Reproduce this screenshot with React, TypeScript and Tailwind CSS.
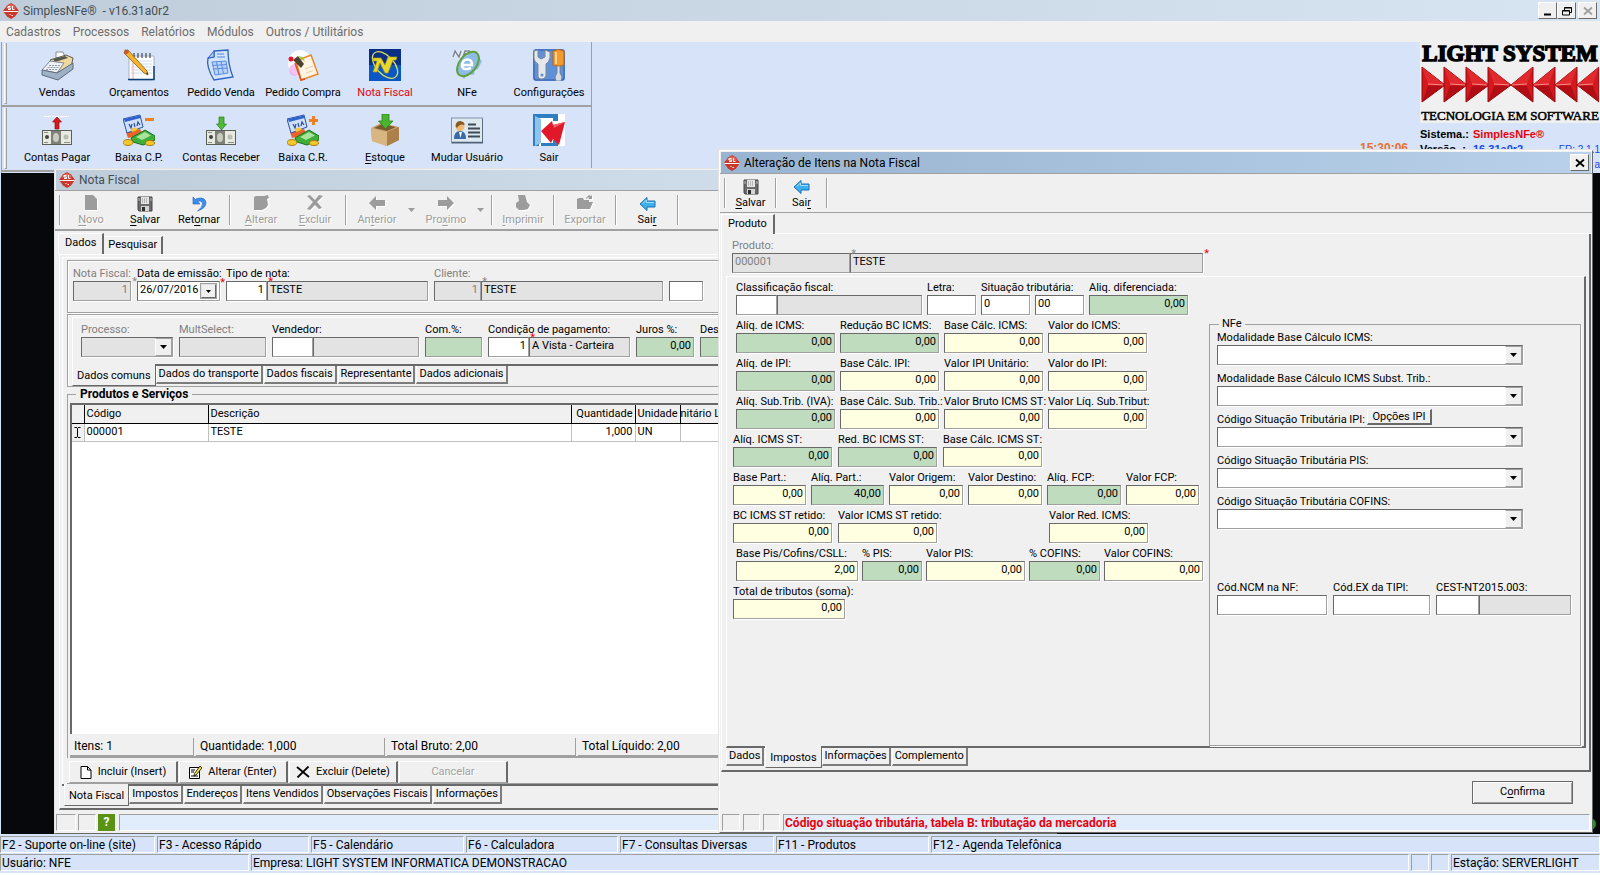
import React, { useId } from "react";

/* ---------- icons ---------- */

const AppIcon = () => (
    <svg width="16" height="16" viewBox="0 0 16 16" aria-hidden="true">
        <path d="M8 0 L12 2.5 L16 8 L12 13.5 L8 16 L4 13.5 L0 8 L4 2.5Z" fill="#c8382b" />
        <path d="M8 1 L11.5 3 L13 5.5 H3 L4.5 3Z" fill="#e2675a" />
        <path d="M0 8 H16 L15.2 9 H0.8Z" fill="#fff" />
        <path d="M5 3.5h2.5M5 3.5v1.5h2.5v1.5H5M9.5 3v3.5h2" stroke="#fff" strokeWidth="1" fill="none" />
        <path d="M6.5 11.5h1M8.5 12.5h1.5" stroke="#fff" strokeWidth="1" />
    </svg>
);

const RegisterIcon = () => (
    <svg width="34" height="32" viewBox="0 0 34 32" aria-hidden="true">
        <path d="M16 3 l7 0 2 5 -9 1z" fill="#fff" stroke="#8a8f99" />
        <path d="M10 11 L26 6 L33 9 L31 19 L18 23Z" fill="#f0d9a0" stroke="#3b3b3b" strokeWidth="0.8" />
        <path d="M13 10 L25 7 L28 9 L15 13Z" fill="#56584a" />
        <path d="M2 21 L10 12 L24 14 L17 24Z" fill="#eef1f5" stroke="#7b8794" />
        <path d="M2 21 L17 24 L33 14 V20 L18 31 L2 26Z" fill="#9fb1c6" stroke="#5c6b7c" />
        <path d="M9 16.500h11M7.500 18.500h11M6 20.500h11" stroke="#8d98a6" strokeDasharray="2 1" strokeWidth="1.200" />
    </svg>
);

const NotepadIcon = () => (
    <svg width="32" height="32" viewBox="0 0 32 32" aria-hidden="true">
        <path d="M6 7 H31 V30 L29 31 H6Z" fill="#fff" stroke="#a9b4c2" />
        <path d="M8 12h21M8 15h21M8 18h21M8 21h21M8 24h21" stroke="#c9dcf2" />
        <path d="M10 8v22" stroke="#f2a3a3" />
        <path d="M5 30.500 H31 V17" fill="none" stroke="#0b3f78" strokeWidth="1.500" />
        <path d="M11 4v5M15 4v5M19 4v5M23 4v5M27 4v5" stroke="#444c57" strokeWidth="1.200" />
        <path d="M2 1 L5 1 L24 22 L25 26 L21 24 L1 4Z" fill="#f5b52a" stroke="#8c5a12" strokeWidth="0.800" />
        <path d="M1 4 L2 1 L5 1 L6 3 L3 6Z" fill="#c35a3b" />
        <path d="M23 24 L25 26 L24.500 23.500Z" fill="#222" />
    </svg>
);

const SheetIcon = () => (
    <svg width="32" height="32" viewBox="0 0 32 32" aria-hidden="true">
        <path d="M9 2 L23 1 Q23 16 28 28 L9 31 Q1 18 3 9 L9 8Z" fill="#d4e4fb" stroke="#2e62c4" strokeWidth="1.300" />
        <path d="M9 2 L9 8 L3 9Z" fill="#a9c8f7" stroke="#2e62c4" />
        <path d="M12 5h7M12 8h8" stroke="#7ba5ea" strokeWidth="1.500" />
        <path d="M7 13 L21 12 L23 24 L10 26Z" fill="#b9d3fa" stroke="#5b8be0" />
        <path d="M11.500 13 l2.500 12.500M16 12.500 l2.500 12M7.500 16.500 l14.500-1M8 20 l14.500-1" stroke="#5b8be0" />
    </svg>
);

const PurchaseIcon = () => (
    <svg width="32" height="32" viewBox="0 0 32 32" aria-hidden="true">
        <ellipse cx="13" cy="14" rx="12" ry="13" fill="#fff" opacity="0.900" />
        <ellipse cx="8" cy="21" rx="6" ry="6" fill="#f3a6f0" opacity="0.700" />
        <path d="M9 12 L24 6 L31 25 L14 31Z" fill="#fdf4e3" stroke="#e78a2c" strokeWidth="1.500" />
        <path d="M8 14 L14 31 L18 30" stroke="#e0511b" strokeWidth="1.500" fill="none" />
        <path d="M6 11 L11 7 L17 15 L14 19Z" fill="#4b4230" />
        <path d="M11 7 l5 1 2 5z" fill="#a7c64a" />
        <circle cx="4" cy="10" r="2.500" fill="#e8162a" />
        <path d="M18 20l8-3M19 24l7-2.500" stroke="#e6cfae" />
    </svg>
);

const NotaIcon = () => (
    <svg width="32" height="32" viewBox="0 0 32 32" aria-hidden="true">
        <rect width="32" height="32" fill="#0a2e86" />
        <rect y="16" width="32" height="16" fill="#0b58c4" />
        <ellipse cx="16" cy="16" rx="16" ry="9" transform="rotate(48 16 16)" fill="none" stroke="#d8df5a" strokeWidth="1.300" />
        <path d="M4 9 H12 L16 16 L19 8 H28 L27 11 H24 L19 24 H16 L11 14 L8 23 H4 L8 12 H4Z" fill="#e9d82b" stroke="#a8981a" strokeWidth="0.700" />
    </svg>
);

const NfeIcon = () => (
    <svg width="32" height="32" viewBox="0 0 32 32" aria-hidden="true">
        <path d="M12 6 L26 2 L28 9 L31 12 L27 20 L24 21 L23 26 L17 25 L13 30 L9 25 L5 22Z" fill="#8dbbe6" />
        <path d="M2 8 l2-6 4 6 2-6M12 8 l2-6h5M13 5h4" fill="none" stroke="#eef3f8" strokeWidth="3" />
        <path d="M2 8 l2-6 4 6 2-6M12 8 l2-6h5M13 5h4" fill="none" stroke="#7a8696" strokeWidth="1.500" />
        <ellipse cx="17" cy="15" rx="14" ry="8.500" transform="rotate(-52 17 15)" fill="none" stroke="#5fa03a" strokeWidth="2" />
        <path d="M12 16 H21 Q21 10 16 10.500 Q11 11 11 17 Q12 22 20 19" fill="none" stroke="#fff" strokeWidth="2.500" />
    </svg>
);

const ConfigIcon = () => (
    <svg width="32" height="32" viewBox="0 0 32 32" aria-hidden="true">
        <rect width="32" height="32" rx="3" fill="#5f90d8" />
        <rect x="1" y="1" width="30" height="30" rx="2" fill="none" stroke="#2f5ea8" />
        <path d="M1 2 L5 1 V8 L8 10 L12 8 V1 L17 3 V9 Q16 13 13 15 V27 Q11 31 8 30 Q5 30 5 27 V15 Q1 13 1 9Z" fill="#e4e8ed" stroke="#7c8794" />
        <circle cx="9" cy="26" r="1.500" fill="#5f90d8" />
        <path d="M20 2 Q25 -1 31 2 V16 Q26 19 20 16Z" fill="#f59a2c" stroke="#b5641a" />
        <path d="M23 3 V15" stroke="#ffd591" strokeWidth="2" />
        <path d="M24 17h3v7l2 4-1 4h-5l-1-4 2-4z" fill="#d7dce2" stroke="#6f7a87" strokeWidth="0.800" />
    </svg>
);

const Bill = () => (
    <g>
        <rect x="1.500" y="16.500" width="29" height="14" fill="#e8e9e0" stroke="#5b6056" />
        <rect x="10" y="17" width="10" height="13" fill="#7e8178" />
        <ellipse cx="15" cy="23.500" rx="3" ry="4.500" fill="#c9cbc0" />
        <circle cx="6" cy="23" r="2" fill="#3f4540" />
        <circle cx="25" cy="23" r="2.500" fill="#b9bcb0" />
        <path d="M3 18.500h4M3 28.500h4M23 28.500h6" stroke="#8b9086" />
    </g>
);

const PayIcon = () => (
    <svg width="32" height="32" viewBox="0 0 32 32" aria-hidden="true">
        <path d="M3 2.500h25" stroke="#fff" strokeDasharray="7 1" />
        <path d="M16 3 L20.500 8 H18 V15 H14 V8 H11.500Z" fill="#d9161b" stroke="#8f0d10" strokeWidth="0.700" />
        <Bill />
    </svg>
);

const ReceiveIcon = () => (
    <svg width="32" height="32" viewBox="0 0 32 32" aria-hidden="true">
        <path d="M14 3 h5 v7 h2.500 L16.500 16 L11.500 10 H14Z" fill="#4fb83a" stroke="#2a7d1b" strokeWidth="0.700" />
        <Bill />
    </svg>
);

const SettleIcon = ({ plus }: { plus?: boolean }) => (
    <svg width="32" height="32" viewBox="0 0 32 32" aria-hidden="true">
        <path d="M3 18 l14-3 3 6 -15 3z" fill="#e8642a" />
        <path d="M0 5 L17 1 L20 13 L4 19Z" fill="#cfe0fa" stroke="#2b50a8" />
        <path d="M1 5 L17 1.500 L17.500 4 L2 8Z" fill="#2f62d0" />
        <path d="M6 10 l2 4 1-4M11 9l1 4M14 12 l1-4 2 3" stroke="#2f4d9c" fill="none" strokeWidth="1.200" />
        <path d="M8 15 Q12 12 15 15 Q12 18 9 18Z" fill="#f6c533" />
        <path d="M8 24 L22 16 L32 22 V26 L20 31 L10 28Z" fill="#3fae3b" stroke="#1d6f1e" />
        <path d="M13 23 L22 18 L28 21.500 L19 26Z" fill="#a9e49a" />
        <ellipse cx="5" cy="28.500" rx="5" ry="3" fill="#f4c72c" stroke="#a97e10" />
        <ellipse cx="27" cy="29" rx="4.500" ry="2.500" fill="#f4c72c" stroke="#a97e10" />
        <path d={plus ? "M22 6.500h9M26.500 2v9" : "M22 5.500h9"} stroke="#f08024" strokeWidth="3" />
    </svg>
);

const BoxIcon = () => (
    <svg width="32" height="32" viewBox="0 0 32 32" aria-hidden="true">
        <path d="M2 14 L12 9 L30 13 V26 L18 32 L3 27Z" fill="#c9a26d" />
        <path d="M2 14 L18 18 V32 L3 27Z" fill="#d9b681" />
        <path d="M18 18 L30 13 V26 L18 32Z" fill="#ab8049" />
        <path d="M5 14 L13 10 L27 13 L18 17Z" fill="#7d5a30" />
        <path d="M13 0 H20 V7 H24 L16.500 15 L9.500 7 H13Z" fill="#4bb32e" stroke="#2b8115" strokeWidth="0.800" />
    </svg>
);

const UserCardIcon = () => (
    <svg width="32" height="32" viewBox="0 0 32 32" aria-hidden="true">
        <rect x="0.500" y="4" width="31" height="25" fill="#dce9f1" stroke="#8295a8" />
        <path d="M1 28.500h31V5" fill="none" stroke="#4f6174" strokeWidth="1.500" />
        <path d="M3 25 Q3 17 9 17 Q15 17 15 25Z" fill="#3a6aa8" />
        <path d="M8 18 l1.500 6 1.500-6z" fill="#fff" />
        <circle cx="9" cy="12.500" r="4.500" fill="#f0b978" />
        <path d="M4.500 12 Q5 7 9.500 7 Q14 8 13.500 11 Q9 9 6 14Z" fill="#8a5a22" />
        <path d="M17 10.500h8M17 14.500h12M17 18.500h12M17 22.500h12" stroke="#3f4a55" strokeWidth="1.800" />
    </svg>
);

const ExitIcon = () => (
    <svg width="32" height="32" viewBox="0 0 32 32" aria-hidden="true">
        <rect width="32" height="32" fill="#fff" />
        <path d="M0 0 H25 V7 H20 V4 H6 V32 H0Z" fill="#2f7fc0" />
        <path d="M2 2 L8 5 V29 L2 32Z" fill="#8fc3ec" />
        <path d="M20 26h5v6h-17v-3h12z" fill="#2f7fc0" />
        <path d="M8 17 L19 7 L20 11 L32 8 L26 31 L20 25 L18 29Z" fill="#e0182a" />
        <path d="M19 7 L20 11 L32 8 L21 14Z" fill="#f4606a" />
    </svg>
);

const SaveIcon = () => (
    <svg width="16" height="16" viewBox="0 0 16 16" aria-hidden="true">
        <path d="M1 1h14v14H2L1 14z" fill="#6b6b6b" stroke="#444" />
        <rect x="4" y="1" width="8" height="7" fill="#e6e6e6" />
        <path d="M5.500 2v5M7.500 2v5M9.500 2v5" stroke="#b5b5b5" />
        <rect x="4" y="10" width="8" height="5" fill="#d5d5d5" />
        <rect x="5" y="11" width="3" height="4" fill="#2d2d2d" />
        <path d="M2 2v3M14 2v3" stroke="#bbb" />
    </svg>
);

const UndoIcon = () => (
    <svg width="16" height="16" viewBox="0 0 16 16" aria-hidden="true">
        <path d="M2 1 V8 H9 L6.500 5.500 Q11 4 11.500 7.500 Q12 11 6.500 15 Q14.500 12.500 15 7 Q14.500 0.500 6 2.500 L4.500 3.500Z" fill="#3d8ef0" stroke="#1b5fc4" strokeWidth="0.600" />
    </svg>
);

const BackIcon = () => (
    <svg width="17" height="16" viewBox="0 0 17 16" aria-hidden="true">
        <path d="M1 8 L8 1.500 V5 H16 V11 H8 V14.500Z" fill="#3fb0ee" stroke="#1a6fb0" />
        <path d="M3.500 7.500 L7.500 4 V6.500 H15" fill="none" stroke="#a6dcfa" />
    </svg>
);

const GrayIcon = ({ d }: { d: string }) => (
    <svg width="17" height="17" viewBox="0 0 17 17" aria-hidden="true">
        <path d={d} fill="#fff" transform="translate(1 1)" />
        <path d={d} fill="#9c9c9c" />
    </svg>
);

const grayPaths = {
    novo: "M2 0H10L14 4V15H2Z",
    alterar: "M1 2L3 1H11L15 0L16 3L14 4L15 10L13 13L9 15H1Z",
    excluir: "M0 1L3 0L8 5L12 0L16 1L10 7L15 13L12 14L8 10L3 15L0 14L6 7Z",
    anterior: "M0 8L7 1V5H16V11H7V15Z",
    proximo: "M16 8L9 1V5H0V11H9V15Z",
    imprimir: "M3 0H10L11 3L12 7L15 10L13 14L9 15H4L1 12V8L4 6Z",
    exportar: "M0 4L2 3H6L7 5H12V7H16L13 14H0ZM9 3L12 0L14 1L15 0V4H11L12 3L11 2L10 4Z",
};

const Caret = ({ className = "fill-black" }: { className?: string }) => (
    <svg width="7" height="4" viewBox="0 0 7 4" className={className} aria-hidden="true">
        <path d="M0 0H7L3.500 4Z" />
    </svg>
);

/* ---------- shared controls ---------- */

// "&Salvar" underlines the S, like a Windows accelerator
const Accel = ({ text }: { text: string }) => {
    const i = text.indexOf("&");
    if (i < 0) return <>{text}</>;
    return (
        <>
            {text.slice(0, i)}
            <u className="underline-offset-2">{text[i + 1]}</u>
            {text.slice(i + 2)}
        </>
    );
};

const Star = ({ red }: { red?: boolean }) => (
    <span aria-hidden="true" className={`absolute -right-1.5 -top-1 z-10 h-2 text-[11px] leading-[10px] ${red ? "text-red-600" : "text-[#8a8a8a]"}`}>
        *
    </span>
);

const tones = {
    white: "bg-white",
    gray: "bg-[#e3e3e3]",
    green: "bg-[#bfdcbf]",
    yellow: "bg-[#ffffe1]",
};

type BoxProps = {
    value?: string;
    tone?: keyof typeof tones;
    w: string;
    right?: boolean;
    muted?: boolean;
    star?: "red" | "gray";
    id?: string;
    label?: string;
};

const Box = ({ value = "", tone = "white", w, right, muted, star, id, label }: BoxProps) => (
    <span className={`relative block shrink-0 ${w}`}>
        <input
            id={id}
            aria-label={id ? undefined : label}
            defaultValue={value}
            disabled={muted}
            className={`block h-5 w-full border border-b-[#a0a0a0] border-l-[#696969] border-r-[#a0a0a0] border-t-[#696969] px-0.5 pb-1 leading-none shadow-[1px_1px_0_#fff] outline-none ${tones[tone]} ${right ? "text-right" : ""} ${muted ? "text-[#808080]" : "text-black"}`}
        />
        {star && <Star red={star === "red"} />}
    </span>
);

const FieldLabel = ({ id, text, muted }: { id: string; text: string; muted?: boolean }) => (
    <label htmlFor={id} className={`block h-[18px] w-0 whitespace-nowrap pt-[3px] leading-[15px] ${muted ? "text-[#808080]" : "text-black"}`}>
        {text}
    </label>
);

const Field = ({ label, extra, ...box }: BoxProps & { label: string; extra?: Omit<BoxProps, "id"> }) => {
    const id = useId();
    return (
        <div className="shrink-0">
            <FieldLabel id={id} text={label} muted={box.muted} />
            <div className="flex">
                <Box {...box} id={id} />
                {extra && <Box {...extra} label={label + " descrição"} />}
            </div>
        </div>
    );
};

const Num = ({ label, w = "w-[99px]", tone = "yellow", value = "0,00" }: { label: string; w?: string; tone?: keyof typeof tones; value?: string }) => (
    <Field label={label} w={w} tone={tone} value={value} right />
);

const Combo = ({ label, w, disabled, children }: { label: string; w: string; disabled?: boolean; children?: React.ReactNode }) => {
    const id = useId();
    return (
        <div className={`shrink-0 ${w}`}>
            <div className="flex h-[18px]">
                <label htmlFor={id} className={`whitespace-nowrap pt-[3px] leading-[15px] ${disabled ? "text-[#808080]" : "text-black"}`}>
                    {label}
                </label>
                {children}
            </div>
            <div className={`relative h-5 border border-b-[#a0a0a0] border-l-[#696969] border-r-[#a0a0a0] border-t-[#696969] shadow-[1px_1px_0_#fff] ${disabled ? "bg-[#e3e3e3]" : "bg-white"}`}>
                <select id={id} disabled={disabled} className="block h-full w-full appearance-none px-0.5 outline-none">
                    <option value=""></option>
                </select>
                <span className="pointer-events-none absolute inset-y-0 right-0 flex w-[17px] items-center justify-center border border-b-[#a0a0a0] border-l-white border-r-[#a0a0a0] border-t-[#a0a0a0] bg-[#f0f0f0]">
                    <Caret />
                </span>
            </div>
        </div>
    );
};

const Separator = () => <span className="mx-[3px] my-1 w-[2px] shrink-0 self-stretch border-l border-r border-l-[#a0a0a0] border-r-white" />;

const ToolButton = ({ icon, text, w = "w-[54px]", disabled }: { icon: React.ReactNode; text: string; w?: string; disabled?: boolean }) => (
    <button disabled={disabled} className={`flex shrink-0 flex-col items-center pt-1 text-[11px] leading-[16px] ${w} ${disabled ? "text-[#9c9c9c] [text-shadow:1px_1px_0_#fff]" : "text-black"}`}>
        <span className="flex h-[17px] items-center">{icon}</span>
        <span>
            <Accel text={text} />
        </span>
    </button>
);

const DropArrow = () => (
    <button disabled aria-label="Mais opções" className="flex w-[15px] shrink-0 items-center justify-center">
        <Caret className="fill-[#9c9c9c]" />
    </button>
);

// tabs that hang below the page; the active one is a little taller
const BottomTabs = ({ tabs, active }: { tabs: string[]; active: string }) => (
    <div role="tablist" className="flex items-start">
        {tabs.map((t) => (
            <button
                key={t}
                role="tab"
                aria-selected={t === active}
                className={
                    t === active
                        ? "relative -mt-0.5 h-[22px] shrink-0 border-b border-l border-r border-b-[#696969] border-l-white border-r-[#696969] bg-[#f0f0f0] px-1 pt-1"
                        : "mr-px h-[18px] shrink-0 border-b-2 border-l border-r-2 border-b-[#7c7c7c] border-l-white border-r-[#7c7c7c] px-0.5"
                }
            >
                {t}
            </button>
        ))}
    </div>
);

/* ---------- main window ---------- */

const rows = [
    [
        { text: "Vendas", icon: <RegisterIcon /> },
        { text: "Orçamentos", icon: <NotepadIcon /> },
        { text: "Pedido Venda", icon: <SheetIcon /> },
        { text: "Pedido Compra", icon: <PurchaseIcon /> },
        { text: "Nota Fiscal", icon: <NotaIcon />, red: true },
        { text: "NFe", icon: <NfeIcon /> },
        { text: "Configurações", icon: <ConfigIcon /> },
    ],
    [
        { text: "Contas Pagar", icon: <PayIcon /> },
        { text: "Baixa C.P.", icon: <SettleIcon /> },
        { text: "Contas Receber", icon: <ReceiveIcon /> },
        { text: "Baixa C.R.", icon: <SettleIcon plus /> },
        { text: "&Estoque", icon: <BoxIcon /> },
        { text: "Mudar Usuário", icon: <UserCardIcon /> },
        { text: "Sair", icon: <ExitIcon /> },
    ],
];

const MainToolbar = () => (
    <div className="ml-px w-[591px] border-l border-r border-l-[#a0a0a0] border-r-[#a0a0a0]">
        {rows.map((row, i) => (
            <div key={i} className="flex h-[65px] border-b-2 border-b-[#a0a0a0] pl-0.5">
                <span className="my-px mr-[9px] w-[3px] border-b border-l border-r border-b-[#a0a0a0] border-l-white border-r-[#a0a0a0]" />
                {row.map((item) => (
                    <button key={item.text} className={`flex w-[82px] shrink-0 flex-col items-center gap-[5px] whitespace-nowrap pt-[7px] leading-[14px] ${"red" in item && item.red ? "text-red-600" : "text-black"}`}>
                        {item.icon}
                        <span>
                            <Accel text={item.text} />
                        </span>
                    </button>
                ))}
            </div>
        ))}
    </div>
);

const Logo = () => (
    <div className="flex w-[180px] flex-col items-center overflow-hidden bg-[#f0f0f0] font-['Liberation_Serif',serif] text-black">
        <p className="whitespace-nowrap text-[23px] font-bold leading-[24px] [-webkit-text-stroke:1.5px_#000]">LIGHT SYSTEM</p>
        <svg width="178" height="38" viewBox="0 0 178 38" aria-hidden="true">
            {[0, 22, 44, 66].map((x) => (
                <g key={x}>
                    <path d={`M${x + 1} 1 L${x + 24} 19 L${x + 1} 36Z`} fill="#d4181e" stroke="#8f0a10" />
                    <path d={`M${x + 1} 1 L${x + 7} 18 L${x + 24} 19Z`} fill="#e02a2e" />
                    <path d={`M${x + 1} 36 L${x + 7} 20 L${x + 24} 19Z`} fill="#b00d14" />
                    <path d={`M${x + 7} 18 L${x + 22} 19`} stroke="#ff8a8a" />
                </g>
            ))}
            {[90, 112, 134, 156].map((x) => (
                <g key={x}>
                    <path d={`M${x + 22} 1 L${x} 19 L${x + 22} 36Z`} fill="#d4181e" stroke="#8f0a10" />
                    <path d={`M${x + 22} 1 L${x + 16} 18 L${x} 19Z`} fill="#e02a2e" />
                    <path d={`M${x + 22} 36 L${x + 16} 20 L${x} 19Z`} fill="#b00d14" />
                    <path d={`M${x + 16} 18 L${x + 1} 19`} stroke="#ff8a8a" />
                </g>
            ))}
        </svg>
        <p className="whitespace-nowrap pt-1 text-[13px] leading-[15px] [-webkit-text-stroke:0.5px_#000]">TECNOLOGIA EM SOFTWARE</p>
    </div>
);

const SystemInfo = () => (
    <div className="flex flex-col items-end">
        <Logo />
        <div className="grid w-[240px] grid-cols-[60px_53px_1fr] whitespace-nowrap pt-1 font-['Liberation_Sans',sans-serif] text-[11px] font-bold leading-[15px]">
            <span />
            <span className="text-black">Sistema.:</span>
            <span className="text-red-600">SimplesNFe®</span>
            <span className="text-xs leading-[13px] text-[#e8702a]">15:30:06</span>
            <span className="leading-[15px] text-black">Versão .:</span>
            <span className="flex justify-between leading-[15px] text-blue-700">
                16.31a0r2 <span className="text-[10px] font-normal">FR: 2.1.1</span>
            </span>
            <span className="col-span-3 text-right text-[10px] font-normal text-blue-700">a</span>
        </div>
    </div>
);

const CaptionButton = ({ label, disabled, children }: { label: string; disabled?: boolean; children: React.ReactNode }) => (
    <button
        aria-label={label}
        disabled={disabled}
        className={`flex h-[17px] w-[19px] items-center justify-center border border-b-[#696969] border-l-white border-r-[#696969] border-t-white bg-[#f0f0f0] ${disabled ? "text-[#a0a0a0]" : "text-black"}`}
    >
        <svg width="10" height="10" viewBox="0 0 10 10" fill="none" stroke="currentColor" aria-hidden="true">
            {children}
        </svg>
    </button>
);

const closeX = <path d="M1 1.500L9 8.500M9 1.500L1 8.500" strokeWidth="1.800" />;

const menus = ["Cadastros", "Processos", "Relatórios", "Módulos", "Outros / Utilitários"];

const StatusCell = ({ className = "", children }: { className?: string; children?: React.ReactNode }) => (
    <span className={`flex h-[17px] items-center whitespace-nowrap border border-b-white border-l-[#a0a0a0] border-r-white border-t-[#a0a0a0] px-px ${className}`}>{children}</span>
);

const MainStatus = () => (
    <footer className="shrink-0 bg-[#d6e3f8] text-xs text-black">
        <div className="flex gap-0.5 pt-0.5">
            <StatusCell className="w-[155px]">F2 - Suporte on-line (site)</StatusCell>
            <StatusCell className="w-[152px]">F3 - Acesso Rápido</StatusCell>
            <StatusCell className="w-[153px]">F5 - Calendário</StatusCell>
            <StatusCell className="w-[152px]">F6 - Calculadora</StatusCell>
            <StatusCell className="w-[154px]">F7 - Consultas Diversas</StatusCell>
            <StatusCell className="w-[153px]">F11 - Produtos</StatusCell>
            <StatusCell className="flex-1">F12 - Agenda Telefônica</StatusCell>
        </div>
        <div className="flex gap-0.5 pb-0.5 pt-px">
            <StatusCell className="w-[249px]">Usuário: NFE</StatusCell>
            <StatusCell className="flex-1">Empresa: LIGHT SYSTEM INFORMATICA DEMONSTRACAO</StatusCell>
            <StatusCell className="w-[18px]" />
            <StatusCell className="w-[18px]" />
            <StatusCell className="w-[149px]">Estação: SERVERLIGHT</StatusCell>
        </div>
        <div className="h-0.5 bg-white" />
    </footer>
);

/* ---------- Nota Fiscal window ---------- */

const InvoiceToolbar = () => (
    <div className="flex h-[41px] shrink-0 border-b-2 border-t border-b-[#a0a0a0] border-t-[#a0a0a0] pl-px">
        <Separator />
        <ToolButton text="&Novo" disabled icon={<GrayIcon d={grayPaths.novo} />} />
        <ToolButton text="&Salvar" icon={<SaveIcon />} />
        <ToolButton text="Ret&ornar" icon={<UndoIcon />} />
        <Separator />
        <ToolButton text="&Alterar" disabled icon={<GrayIcon d={grayPaths.alterar} />} />
        <ToolButton text="&Excluir" disabled icon={<GrayIcon d={grayPaths.excluir} />} />
        <Separator />
        <ToolButton text="An&terior" disabled icon={<GrayIcon d={grayPaths.anterior} />} />
        <DropArrow />
        <ToolButton text="Pro&ximo" disabled icon={<GrayIcon d={grayPaths.proximo} />} />
        <DropArrow />
        <Separator />
        <ToolButton text="&Imprimir" disabled icon={<GrayIcon d={grayPaths.imprimir} />} />
        <Separator />
        <ToolButton text="Exportar" disabled icon={<GrayIcon d={grayPaths.exportar} />} />
        <Separator />
        <ToolButton text="Sai&r" icon={<BackIcon />} />
        <Separator />
    </div>
);

const DateField = () => {
    const id = useId();
    return (
        <div className="w-[83px] shrink-0">
            <FieldLabel id={id} text="Data de emissão:" />
            <div className="relative flex h-5 items-center border border-b-[#a0a0a0] border-l-[#696969] border-r-[#a0a0a0] border-t-[#696969] bg-white pr-0.5 shadow-[1px_1px_0_#fff]">
                <input id={id} defaultValue="26/07/2016" className="w-0 flex-1 pb-0.5 pl-0.5 outline-none" />
                <button aria-label="Abrir calendário" className="flex h-4 w-[17px] items-center justify-center border-2 border-b-[#696969] border-l-[#e3e3e3] border-r-[#696969] border-t-[#e3e3e3] bg-[#f0f0f0] outline outline-[#a0a0a0] -outline-offset-1">
                    <svg width="5" height="3" viewBox="0 0 5 3" aria-hidden="true">
                        <path d="M0 0H5L2.500 3Z" />
                    </svg>
                </button>
                <Star red />
            </div>
        </div>
    );
};

const ItemsTable = () => (
    <div className="min-h-0 flex-1 overflow-hidden border-l-2 border-t-2 border-l-[#696969] border-t-[#696969] bg-white">
        <table className="w-full table-fixed border-collapse text-left">
            <colgroup>
                <col className="w-[12px]" />
                <col className="w-[124px]" />
                <col className="w-[363px]" />
                <col className="w-[64px]" />
                <col className="w-[45px]" />
                <col />
            </colgroup>
            <thead>
                <tr className="h-[18px] border-b border-b-black bg-[#f0f0f0] [&>th]:whitespace-nowrap [&>th]:border-r [&>th]:border-r-black [&>th]:pr-0.5 [&>th]:font-normal">
                    <th aria-label="Indicador" />
                    <th className="pl-0.5">Código</th>
                    <th className="pl-0.5">Descrição</th>
                    <th className="text-right">Quantidade</th>
                    <th className="pl-0.5">Unidade</th>
                    <th>nitário L</th>
                </tr>
            </thead>
            <tbody>
                <tr className="h-[18px] border-b border-b-[#c0c0c0] [&>td]:border-r [&>td]:border-r-[#c0c0c0] [&>td]:px-0.5">
                    <td className="bg-[#f0f0f0]">
                        <svg width="7" height="11" viewBox="0 0 7 11" fill="none" stroke="#000" aria-hidden="true">
                            <path d="M0.500 0.500H3M4 0.500H6.500M3.500 1V10M0.500 10.500H3M4 10.500H6.500" />
                        </svg>
                    </td>
                    <td>000001</td>
                    <td>TESTE</td>
                    <td className="text-right">1,000</td>
                    <td>UN</td>
                    <td />
                </tr>
            </tbody>
        </table>
    </div>
);

const GridButton = ({ icon, text, disabled }: { icon?: React.ReactNode; text: string; disabled?: boolean }) => (
    <button
        disabled={disabled}
        className={`flex h-[22px] w-[109px] items-center justify-center gap-1.5 border-b border-l border-r-2 border-t border-b-[#a0a0a0] border-l-white border-r-[#696969] border-t-white ${disabled ? "text-[#a0a0a0] [text-shadow:1px_1px_0_#fff]" : "text-black"}`}
    >
        {icon}
        {text}
    </button>
);

const InvoiceWindow = () => (
    <section aria-label="Nota Fiscal" className="absolute bottom-0 left-[54px] top-[126px] flex w-[1003px] flex-col border border-b-[#696969] border-l-[#e3e3e3] border-r-[#696969] border-t-[#e3e3e3] bg-[#f0f0f0]">
        <header className="m-px mb-0 flex h-5 shrink-0 items-center gap-1 bg-gradient-to-r from-[#bfcddb] to-[#d7e4f2] pl-[3px] text-xs text-[#434e54]">
            <AppIcon />
            Nota Fiscal
        </header>
        <InvoiceToolbar />
        <div role="tablist" className="flex h-[23px] shrink-0 items-end pl-[3px] pt-0.5">
            <button role="tab" aria-selected="true" className="h-[21px] border-l border-r-2 border-t border-l-white border-r-[#696969] border-t-white px-1.5 pb-0.5 text-left">
                Dados
            </button>
            <button role="tab" aria-selected="false" className="h-[18px] border-r-2 border-t border-r-[#696969] border-t-white pl-1 pr-1">
                Pesquisar
            </button>
        </div>
        <div className="mx-1 flex min-h-0 flex-1 flex-col border-b-2 border-l border-t border-b-[#696969] border-l-white border-t-white pl-0.5 pt-0.5">
            <div className="flex min-h-0 flex-1 flex-col border-l border-t border-l-white border-t-white pl-1 pt-0.5">
                <div className="flex h-[53px] shrink-0 gap-1.5 border border-[#a0a0a0] pl-[5px] pt-0.5 shadow-[1px_1px_0_#fff,inset_1px_1px_0_#fff]">
                    <Field label="Nota Fiscal:" w="w-[58px]" tone="gray" value="1" right muted star="gray" />
                    <DateField />
                    <Field label="Tipo de nota:" w="w-[41px]" value="1" right star="red" extra={{ w: "w-[161px]", tone: "gray", value: "TESTE" }} />
                    <Field label="Cliente:" w="w-[47px]" tone="gray" value="1" right muted star="gray" extra={{ w: "w-[182px]", tone: "gray", value: "TESTE" }} />
                    <div className="pt-[18px]">
                        <Box w="w-[34px]" label="Complemento do cliente" />
                    </div>
                </div>
                <div className="mt-px shrink-0 border border-[#a0a0a0] pl-1 pt-0.5 shadow-[inset_1px_1px_0_#fff]">
                    <div className="flex h-[49px] gap-1.5 border-b-2 border-l border-t border-b-[#696969] border-l-white border-t-white pl-2 pt-px">
                        <Combo label="Processo:" w="w-[92px]" disabled />
                        <Field label="MultSelect:" w="w-[87px]" tone="gray" muted />
                        <Field label="Vendedor:" w="w-[41px]" extra={{ w: "w-[106px]", tone: "gray" }} />
                        <Field label="Com.%:" w="w-[57px]" tone="green" />
                        <Field label="Condição de pagamento:" w="w-[41px]" value="1" right star="red" extra={{ w: "w-[101px]", tone: "gray", value: "A Vista - Carteira" }} />
                        <Num label="Juros %:" w="w-[58px]" tone="green" />
                        <Field label="Des" w="w-[58px]" tone="green" />
                    </div>
                    <BottomTabs tabs={["Dados comuns", "Dados do transporte", "Dados fiscais", "Representante", "Dados adicionais"]} active="Dados comuns" />
                </div>
                <fieldset className="flex min-h-0 flex-1 flex-col border-l border-t border-[#a0a0a0] pl-0.5 pt-0.5">
                    <legend className="ml-1.5 px-1 text-xs font-bold leading-[14px]">Produtos e Serviços</legend>
                    <div className="flex h-full min-h-0 flex-col">
                        <ItemsTable />
                        <div className="flex shrink-0 border-b-2 border-b-[#a0a0a0] pt-1 text-xs leading-[17px] [&>span]:border-b [&>span]:border-r [&>span]:border-b-[#a0a0a0] [&>span]:border-r-[#a0a0a0] [&>span]:pl-1">
                            <span className="w-[124px]">Itens: 1</span>
                            <span className="ml-0.5 w-[189px]">Quantidade: 1,000</span>
                            <span className="ml-0.5 w-[189px]">Total Bruto: 2,00</span>
                            <span className="ml-0.5 w-[188px]">Total Líquido: 2,00</span>
                        </div>
                    </div>
                </fieldset>
                <div className="flex shrink-0 gap-px border-b border-b-[#a0a0a0] pl-0.5 pt-[3px]">
                    <GridButton
                        text="Incluir (Insert)"
                        icon={
                            <svg width="12" height="13" viewBox="0 0 12 13" aria-hidden="true">
                                <path d="M1 0.500H7.500L11 4V12.500H1Z" fill="#fff" stroke="#000" />
                                <path d="M7.500 0.500V4H11" fill="none" stroke="#000" />
                            </svg>
                        }
                    />
                    <GridButton
                        text="Alterar (Enter)"
                        icon={
                            <svg width="13" height="13" viewBox="0 0 13 13" aria-hidden="true">
                                <path d="M0.500 1.500H10.500V12.500H0.500Z" fill="#fff" stroke="#000" />
                                <path d="M2 4h4M2 6h3M2 10h7" stroke="#000" />
                                <path d="M11 0L13 2L7 9L5 10L5.500 7.500Z" fill="#f2e33a" stroke="#000" strokeWidth="0.800" />
                            </svg>
                        }
                    />
                    <GridButton
                        text="Excluir (Delete)"
                        icon={
                            <svg width="14" height="12" viewBox="0 0 14 12" fill="none" stroke="#000" aria-hidden="true">
                                <path d="M1 1L13 11M12.500 0.500L1.500 11.500" strokeWidth="1.800" />
                            </svg>
                        }
                    />
                    <GridButton text="Cancelar" disabled />
                </div>
            </div>
            <div className="shrink-0 border-t-2 border-t-[#696969] pb-0.5 pl-0.5">
                <BottomTabs tabs={["Nota Fiscal", "Impostos", "Endereços", "Itens Vendidos", "Observações Fiscais", "Informações"]} active="Nota Fiscal" />
            </div>
        </div>
        <div className="mb-0.5 mt-1 flex shrink-0 gap-0.5 px-px">
            <StatusCell className="w-[20px]" />
            <StatusCell className="w-[18px]" />
            <button aria-label="Ajuda" className="h-[17px] w-[17px] bg-[#5a9216] text-xs font-bold leading-[17px] text-white">
                ?
            </button>
            <StatusCell className="ml-0.5 flex-1 bg-[#e1edfb]" />
        </div>
    </section>
);

/* ---------- item edit dialog ---------- */

const ItemDialog = () => {
    const sitId = useId();
    return (
        <section role="dialog" aria-label="Alteração de Itens na Nota Fiscal" className="absolute bottom-px left-[719px] right-[7px] top-[108px] flex flex-col border border-b-[#696969] border-l-white border-r-[#696969] border-t-white bg-[#f0f0f0] shadow-[-1px_-1px_0_#e3e3e3]">
            <header className="m-px mb-0 flex h-[21px] shrink-0 items-center gap-1 bg-gradient-to-r from-[#99b4d1] to-[#b9d1ea] pl-[3px] pr-0.5 text-xs text-black">
                <AppIcon />
                <h2 className="flex-1">Alteração de Itens na Nota Fiscal</h2>
                <CaptionButton label="Fechar">{closeX}</CaptionButton>
            </header>
            <div className="flex h-10 shrink-0 border-b border-t border-b-[#a0a0a0] border-t-[#a0a0a0] pl-px">
                <Separator />
                <ToolButton text="&Salvar" w="w-[43px]" icon={<SaveIcon />} />
                <Separator />
                <ToolButton text="Sai&r" w="w-[43px]" icon={<BackIcon />} />
                <Separator />
            </div>
            <div role="tablist" className="flex h-[21px] shrink-0 items-end pl-px">
                <button role="tab" aria-selected="true" className="h-5 border-l border-r-2 border-t border-l-white border-r-[#696969] border-t-white px-1.5">
                    Produto
                </button>
                <span className="flex-1 self-end border-b border-b-white" />
            </div>
            <div className="mx-px flex min-h-0 flex-1 flex-col border-b-2 border-l border-r-2 border-b-[#696969] border-l-white border-r-[#696969] pb-0.5 pl-1 pr-[3px] pt-px">
                <div className="shrink-0 pl-1.5">
                    <Field label="Produto:" w="w-[118px]" tone="gray" value="000001" muted star="gray" extra={{ w: "w-[353px]", tone: "gray", value: "TESTE", star: "red" }} />
                </div>
                <div className="mt-[3px] flex min-h-0 flex-1 border-b-2 border-l border-r-2 border-t border-b-[#696969] border-l-white border-r-[#696969] border-t-white">
                    <div className="w-[482px] shrink-0 [&>div]:flex [&>div]:h-[38px]">
                        <div className="gap-[5px] pl-[9px]">
                            <Field label="Classificação fiscal:" w="w-[41px]" extra={{ w: "w-[145px]", tone: "gray" }} />
                            <Field label="Letra:" w="w-[49px]" />
                            <div className="shrink-0">
                                <FieldLabel id={sitId} text="Situação tributária:" />
                                <div className="flex gap-[5px]">
                                    <Box id={sitId} w="w-[49px]" value="0" />
                                    <Box label="Situação tributária, tabela B" w="w-[49px]" value="00" />
                                </div>
                            </div>
                            <Num label="Aliq. diferenciada:" tone="green" />
                        </div>
                        <div className="gap-[5px] pl-[9px]">
                            <Num label="Alíq. de ICMS:" tone="green" />
                            <Num label="Redução BC ICMS:" tone="green" />
                            <Num label="Base Cálc. ICMS:" />
                            <Num label="Valor do ICMS:" />
                        </div>
                        <div className="gap-[5px] pl-[9px]">
                            <Num label="Alíq. de IPI:" tone="green" />
                            <Num label="Base Cálc. IPI:" />
                            <Num label="Valor IPI Unitário:" />
                            <Num label="Valor do IPI:" />
                        </div>
                        <div className="gap-[5px] pl-[9px]">
                            <Num label="Alíq. Sub.Trib. (IVA):" tone="green" />
                            <Num label="Base Cálc. Sub. Trib.:" />
                            <Num label="Valor Bruto ICMS ST:" />
                            <Num label="Valor Líq. Sub.Tribut:" />
                        </div>
                        <div className="gap-1.5 pl-1.5">
                            <Num label="Alíq. ICMS ST:" tone="green" />
                            <Num label="Red. BC ICMS ST:" tone="green" />
                            <Num label="Base Cálc. ICMS ST:" />
                        </div>
                        <div className="gap-[5px] pl-1.5">
                            <Num label="Base Part.:" w="w-[73px]" />
                            <Num label="Alíq. Part.:" w="w-[73px]" tone="green" value="40,00" />
                            <Num label="Valor Origem:" w="w-[74px]" />
                            <Num label="Valor Destino:" w="w-[74px]" />
                            <Num label="Alíq. FCP:" w="w-[74px]" tone="green" />
                            <Num label="Valor FCP:" w="w-[73px]" />
                        </div>
                        <div className="gap-1.5 pl-1.5">
                            <Num label="BC ICMS ST retido:" />
                            <Num label="Valor ICMS ST retido:" />
                            <div className="w-[100px]" />
                            <Num label="Valor Red. ICMS:" />
                        </div>
                        <div className="gap-1 pl-[9px]">
                            <Num label="Base Pis/Cofins/CSLL:" w="w-[122px]" value="2,00" />
                            <Num label="% PIS:" w="w-[60px]" tone="green" />
                            <Num label="Valor PIS:" />
                            <Num label="% COFINS:" w="w-[71px]" tone="green" />
                            <Num label="Valor COFINS:" />
                        </div>
                        <div className="pl-1.5">
                            <Num label="Total de tributos (soma):" w="w-[112px]" />
                        </div>
                    </div>
                    <fieldset className="mr-[3px] mt-[45px] flex-1 border border-[#a0a0a0] pl-[7px] shadow-[1px_1px_0_#fff]">
                        <legend className="ml-0.5 h-1 px-[3px] leading-[4px]">NFe</legend>
                        <div className="flex flex-col gap-[3px] pt-px [&>div]:h-[38px]">
                            <Combo label="Modalidade Base Cálculo ICMS:" w="w-[306px]" />
                            <Combo label="Modalidade Base Cálculo ICMS Subst. Trib.:" w="w-[306px]" />
                            <Combo label="Código Situação Tributária IPI:" w="w-[306px]">
                                <button className="ml-0.5 h-4 w-[65px] border-b-2 border-l border-r-2 border-t border-b-[#696969] border-l-white border-r-[#696969] border-t-white leading-none">Opções IPI</button>
                            </Combo>
                            <Combo label="Código Situação Tributária PIS:" w="w-[306px]" />
                            <Combo label="Código Situação Tributária COFINS:" w="w-[306px]" />
                        </div>
                        <div className="mt-12 flex gap-1.5">
                            <Field label="Cód.NCM na NF:" w="w-[110px]" />
                            <Field label="Cód.EX da TIPI:" w="w-[97px]" />
                            <Field label="CEST-NT2015.003:" w="w-[43px]" extra={{ w: "w-[92px]", tone: "gray" }} />
                        </div>
                    </fieldset>
                </div>
                <BottomTabs tabs={["Dados", "Impostos", "Informações", "Complemento"]} active="Impostos" />
            </div>
            <div className="flex h-10 shrink-0 items-center justify-end pr-[19px]">
                <button className="h-[23px] w-[101px] border border-[#696969] shadow-[inset_1px_1px_0_#fff,inset_-1px_-1px_0_#a0a0a0]">
                    <Accel text="C&onfirma" />
                </button>
            </div>
            <div className="mb-px flex shrink-0 gap-[3px] px-0.5 pt-0.5">
                <StatusCell className="w-[18px]" />
                <StatusCell className="w-[17px]" />
                <StatusCell className="w-[17px]" />
                <StatusCell className="flex-1 bg-[#e1edfb] text-xs font-bold text-red-600">Código situação tributária, tabela B: tributação da mercadoria</StatusCell>
            </div>
        </section>
    );
};

const App: React.FC = () => {
    return (
        <div className="flex h-screen flex-col overflow-hidden bg-[#d6e3f8] font-['Roboto','Liberation_Sans',sans-serif] text-[11px]">
            <header className="flex h-[21px] shrink-0 items-center gap-1 bg-gradient-to-r from-[#bfcddb] to-[#d7e4f2] px-[3px] text-xs text-[#434e54]">
                <AppIcon />
                <h1 className="flex-1 whitespace-pre">SimplesNFe®  - v16.31a0r2</h1>
                <div className="flex">
                    <CaptionButton label="Minimizar">
                        <path d="M1 8.500H8" strokeWidth="2" />
                    </CaptionButton>
                    <CaptionButton label="Restaurar">
                        <path d="M2.500 4V1.500H9.500V6.500H7M0.500 4.500H7.500V9H0.500ZM2.500 2H9.500M0.500 5H7.500" />
                    </CaptionButton>
                    <span className="w-0.5" />
                    <CaptionButton label="Fechar" disabled>
                        {closeX}
                    </CaptionButton>
                </div>
            </header>
            <nav className="flex h-[21px] shrink-0 items-center gap-3 bg-[#f0f0f0] pl-1.5 text-xs text-[#6d6d6d]">
                {menus.map((m) => (
                    <button key={m}>{m}</button>
                ))}
            </nav>
            <main className="relative flex min-h-0 flex-1 flex-col">
                <div className="flex h-[131px] shrink-0 justify-between overflow-hidden">
                    <MainToolbar />
                    <SystemInfo />
                </div>
                <div className="ml-px flex flex-1 items-end justify-end bg-[#07080b] pb-1 pr-1">
                    <span className="h-3 w-3 rounded-full bg-[#12a012]" />
                </div>
                <InvoiceWindow />
                <ItemDialog />
            </main>
            <MainStatus />
        </div>
    );
};

export default App;
